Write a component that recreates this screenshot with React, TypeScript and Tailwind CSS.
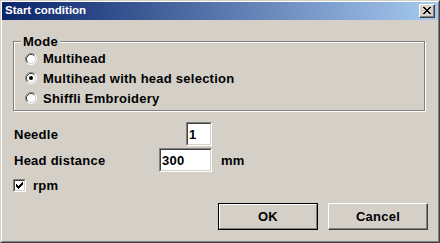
import React from "react";

const font = { fontFamily: '"Liberation Sans", Arial, sans-serif' };

function Radio({ checked }: { checked?: boolean }) {
  return (
    <svg width="12" height="12" viewBox="0 0 12 12" className="shrink-0">
      <circle cx="6" cy="6" r="5" fill="#fff" />
      <path d="M2.11 9.89 A5.5 5.5 0 0 1 9.89 2.11" fill="none" stroke="#808080" strokeWidth="1" />
      <path d="M9.89 2.11 A5.5 5.5 0 0 1 2.11 9.89" fill="none" stroke="#ffffff" strokeWidth="1" />
      <path d="M2.82 9.18 A4.5 4.5 0 0 1 9.18 2.82" fill="none" stroke="#404040" strokeWidth="1" />
      <path d="M9.18 2.82 A4.5 4.5 0 0 1 2.82 9.18" fill="none" stroke="#d4d0c8" strokeWidth="1" />
      {checked && <circle cx="6" cy="6" r="2" fill="#000" />}
    </svg>
  );
}

function RadioRow({ label, checked, h }: { label: string; checked?: boolean; h: string }) {
  return (
    <div className={`flex items-center ${h}`}>
      <Radio checked={checked} />
      <span className="ml-[6px] text-[13px] font-bold text-black leading-none tracking-[0.25px]">{label}</span>
    </div>
  );
}

function TextBox({ value, w }: { value: string; w: string }) {
  return (
    <div className={`${w} h-[24px] border border-t-[#808080] border-l-[#808080] border-r-white border-b-white`}>
      <div className="h-full w-full border border-t-[#404040] border-l-[#404040] border-r-[#d4d0c8] border-b-[#d4d0c8] bg-white flex items-center pl-[1px]">
        <span className="text-[13px] font-bold text-black leading-none tracking-[0.25px]">{value}</span>
      </div>
    </div>
  );
}

export default function App() {
  return (
    <div
      style={font}
      className="w-[440px] h-[243px] bg-[#d4d0c8] border border-t-[#d4d0c8] border-l-[#d4d0c8] border-r-[#404040] border-b-[#404040] select-none"
    >
      <div className="w-full h-full border border-t-white border-l-white border-r-[#808080] border-b-[#808080] flex flex-col">
        {/* Title bar */}
        <div className="h-[18px] bg-linear-to-r/srgb from-[#0a246a] to-[#a6caf0] flex items-center justify-between pl-[3px] pr-[3px]">
          <span className="text-white text-[11.5px] font-bold leading-none">Start condition</span>
          <div className="w-[16px] h-[14px] bg-[#d4d0c8] border border-t-white border-l-white border-r-[#404040] border-b-[#404040]">
            <div className="w-full h-full shadow-[inset_-1px_-1px_0_#808080] flex items-center justify-center">
              <svg width="8" height="7" viewBox="0 0 8 7" shapeRendering="crispEdges" className="mb-[1px]">
                <path d="M0 0h2v1h-2z M6 0h2v1h-2z M1 1h2v1h-2z M5 1h2v1h-2z M2 2h4v1h-4z M3 3h2v1h-2z M2 4h4v1h-4z M1 5h2v1h-2z M5 5h2v1h-2z M0 6h2v1h-2z M6 6h2v1h-2z" fill="#000" />
              </svg>
            </div>
          </div>
        </div>

        {/* Body */}
        <div className="flex flex-col pl-[11px] pr-[13px] text-black">
          {/* Group box */}
          <div className="relative mt-[21px] h-[70px] border border-[#808080] shadow-[1px_1px_0_#fff,inset_1px_1px_0_#fff] flex flex-col pl-[11px] pt-[7px]">
            <span className="absolute left-[7px] top-[-8px] bg-[#d4d0c8] px-[2px] text-[13px] font-bold leading-[15px] tracking-[0.25px]">Mode</span>
            <RadioRow label="Multihead" h="h-[19px]" />
            <RadioRow label="Multihead with head selection" checked h="h-[20px]" />
            <RadioRow label="Shiffli Embroidery" h="h-[20px]" />
          </div>

          {/* Fields */}
          <div className="mt-[11px] flex flex-col w-[199px] pl-[1px]">
            <div className="flex items-center justify-between h-[24px]">
              <span className="text-[13px] font-bold leading-none tracking-[0.25px]">Needle</span>
              <TextBox value="1" w="w-[26px]" />
            </div>
          </div>
          <div className="mt-[2px] flex items-center h-[24px]">
            <div className="flex items-center justify-between w-[199px] pl-[1px]">
              <span className="text-[13px] font-bold leading-none tracking-[0.25px]">Head distance</span>
              <TextBox value="300" w="w-[53px]" />
            </div>
            <span className="ml-[9px] text-[13px] font-bold leading-none tracking-[0.25px]">mm</span>
          </div>
          <div className="mt-[4px] flex items-center h-[19px]">
            <div className="w-[13px] h-[13px] border border-t-[#808080] border-l-[#808080] border-r-white border-b-white">
              <div className="w-full h-full border border-t-[#404040] border-l-[#404040] border-r-[#d4d0c8] border-b-[#d4d0c8] bg-white flex items-center justify-center">
                <svg width="7" height="7" viewBox="0 0 7 7" shapeRendering="crispEdges">
                  <path d="M6 0h1v1h-1z M5 1h1v3h-1z M6 1h1v2h-1z M4 2h1v3h-1z M3 3h1v3h-1z M2 4h1v3h-1z M1 3h1v3h-1z M0 2h1v3h-1z" fill="#000" />
                </svg>
              </div>
            </div>
            <span className="ml-[7px] text-[13px] font-bold leading-none tracking-[0.25px]">rpm</span>
          </div>

          {/* Buttons */}
          <div className="mt-[8px] flex justify-end gap-[10px] mr-[-3px]">
            <div className="w-[100px] h-[27px] border border-black">
              <div className="w-full h-full border border-t-white border-l-white border-r-[#808080] border-b-[#808080] flex items-center justify-center">
                <span className="text-[13px] font-bold leading-none tracking-[0.25px]">OK</span>
              </div>
            </div>
            <div className="w-[100px] h-[27px] border border-t-white border-l-white border-r-[#404040] border-b-[#404040]">
              <div className="w-full h-full shadow-[inset_-1px_-1px_0_#808080] flex items-center justify-center">
                <span className="text-[13px] font-bold leading-none tracking-[0.25px]">Cancel</span>
              </div>
            </div>
          </div>
        </div>
      </div>
    </div>
  );
}
